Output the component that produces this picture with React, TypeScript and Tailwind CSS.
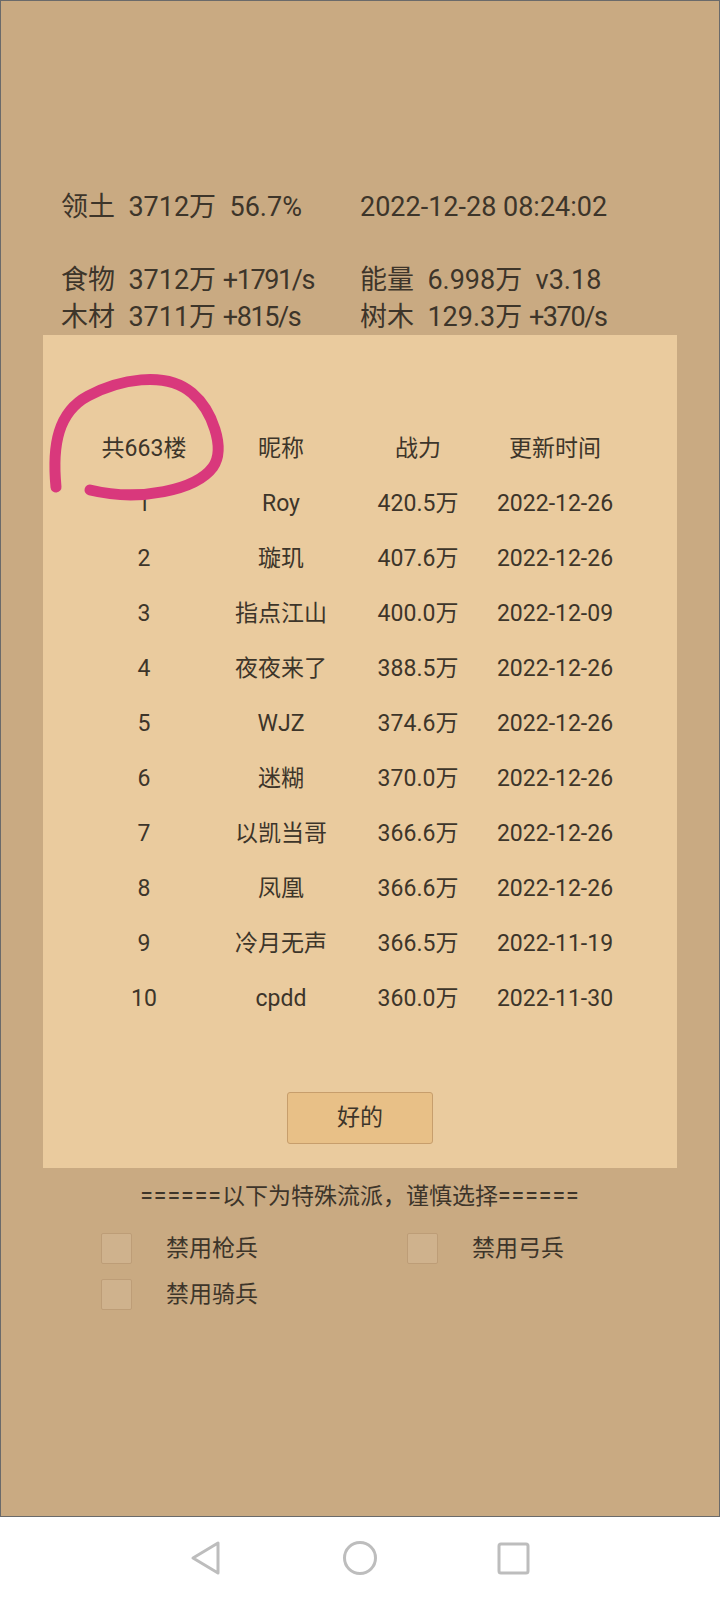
import React from "react";

const rows = [
  { rank: "1", name: "Roy", power: "420.5万", date: "2022-12-26" },
  { rank: "2", name: "璇玑", power: "407.6万", date: "2022-12-26" },
  { rank: "3", name: "指点江山", power: "400.0万", date: "2022-12-09" },
  { rank: "4", name: "夜夜来了", power: "388.5万", date: "2022-12-26" },
  { rank: "5", name: "WJZ", power: "374.6万", date: "2022-12-26" },
  { rank: "6", name: "迷糊", power: "370.0万", date: "2022-12-26" },
  { rank: "7", name: "以凯当哥", power: "366.6万", date: "2022-12-26" },
  { rank: "8", name: "凤凰", power: "366.6万", date: "2022-12-26" },
  { rank: "9", name: "冷月无声", power: "366.5万", date: "2022-11-19" },
  { rank: "10", name: "cpdd", power: "360.0万", date: "2022-11-30" },
];

// [label + value, rate] for each column
const stats: [string, string][][] = [
  [["领土  3712万  56.7%", ""], ["2022-12-28 08:24:02", ""]],
  [["", ""], ["", ""]],
  [["食物  3712万 ", "+1791/s"], ["能量  6.998万  v3.18", ""]],
  [["木材  3711万 ", "+815/s"], ["树木  129.3万 ", "+370/s"]],
];

function Cell({ text, rate }: { text: string; rate: string }) {
  return (
    <>
      {text}
      {rate && <span className="tracking-[-1.4px]">{rate}</span>}
    </>
  );
}

function Checkbox({ label }: { label: string }) {
  return (
    <div className="flex items-center h-[31px]">
      <div className="w-[31px] h-[31px] bg-[#cfb28d] border border-[#bd9d77] rounded-[2px]" />
      <span className="ml-[34px] text-[23px] leading-[31px]">{label}</span>
    </div>
  );
}

export default function App() {
  return (
    <div className="w-[720px] h-[1600px] flex flex-col bg-white text-[#3d352a] font-['Roboto','Noto_Sans_CJK_SC',sans-serif]">
      <div className="relative h-[1517px] bg-[#c9aa82] border border-[#6a6a6a] flex flex-col">
        {/* Stats */}
        <div className="pt-[188px] pl-[60px] text-[27px] leading-[36.5px] whitespace-pre">
          {stats.map((s, i) => (
            <div key={i} className="flex h-[36.5px]">
              <div className="w-[299px]">
                <Cell text={s[0][0]} rate={s[0][1]} />
              </div>
              <div>
                <Cell text={s[1][0]} rate={s[1][1]} />
              </div>
            </div>
          ))}
        </div>

        {/* Ranking panel */}
        <div className="relative ml-[42px] w-[634px] h-[833px] bg-[#eacb9e] flex flex-col">
          <div className="pt-[86.5px] pl-[32.5px] text-[23px]">
            <div className="grid grid-cols-[137px_137px_137px_137px] h-[55px] items-center text-center">
              <div>共663楼</div>
              <div>昵称</div>
              <div>战力</div>
              <div>更新时间</div>
            </div>
            {rows.map((r) => (
              <div key={r.rank} className="grid grid-cols-[137px_137px_137px_137px] h-[55px] items-center text-center">
                <div>{r.rank}</div>
                <div>{r.name}</div>
                <div>{r.power}</div>
                <div>{r.date}</div>
              </div>
            ))}
          </div>
          <div className="flex justify-center mt-[65.5px]">
            <button className="w-[146px] h-[52px] bg-[#e8c087] border border-[#c79e6c] rounded-[3px] text-[23px]">
              好的
            </button>
          </div>

          {/* hand-drawn annotation */}
          <svg className="absolute left-0 top-0 pointer-events-none" width="634" height="833" viewBox="43 335 634 833">
            <path
              d="M56 487 C 52 445, 58 412, 88 396 C 118 380, 165 370, 192 393 C 212 410, 226 448, 213 467 C 196 490, 140 502, 90 490"
              fill="none"
              stroke="#d9387c"
              strokeWidth="11"
              strokeLinecap="round"
              strokeLinejoin="round"
            />
          </svg>
        </div>

        <div className="mt-[14px] text-center text-[23px] leading-[30px]">
          <span className="tracking-[1px]">======</span>以下为特殊流派，谨慎选择<span className="tracking-[1px]">======</span>
        </div>

        <div className="mt-[21px] pl-[100px] grid grid-cols-[306px_306px] gap-y-[15px]">
          <Checkbox label="禁用枪兵" />
          <Checkbox label="禁用弓兵" />
          <Checkbox label="禁用骑兵" />
        </div>
      </div>

      {/* Navigation bar */}
      <div className="h-[83px] bg-white relative flex items-center justify-center">
        <svg width="720" height="83" viewBox="0 1517 720 83">
          <path d="M218 1543 L218 1573 L193 1558 Z" fill="none" stroke="#bdbdbd" strokeWidth="3" strokeLinejoin="round" />
          <circle cx="360" cy="1558" r="15.5" fill="none" stroke="#bdbdbd" strokeWidth="3" />
          <rect x="499" y="1544" width="29" height="29" rx="2" fill="none" stroke="#bdbdbd" strokeWidth="3" />
        </svg>
      </div>
    </div>
  );
}
